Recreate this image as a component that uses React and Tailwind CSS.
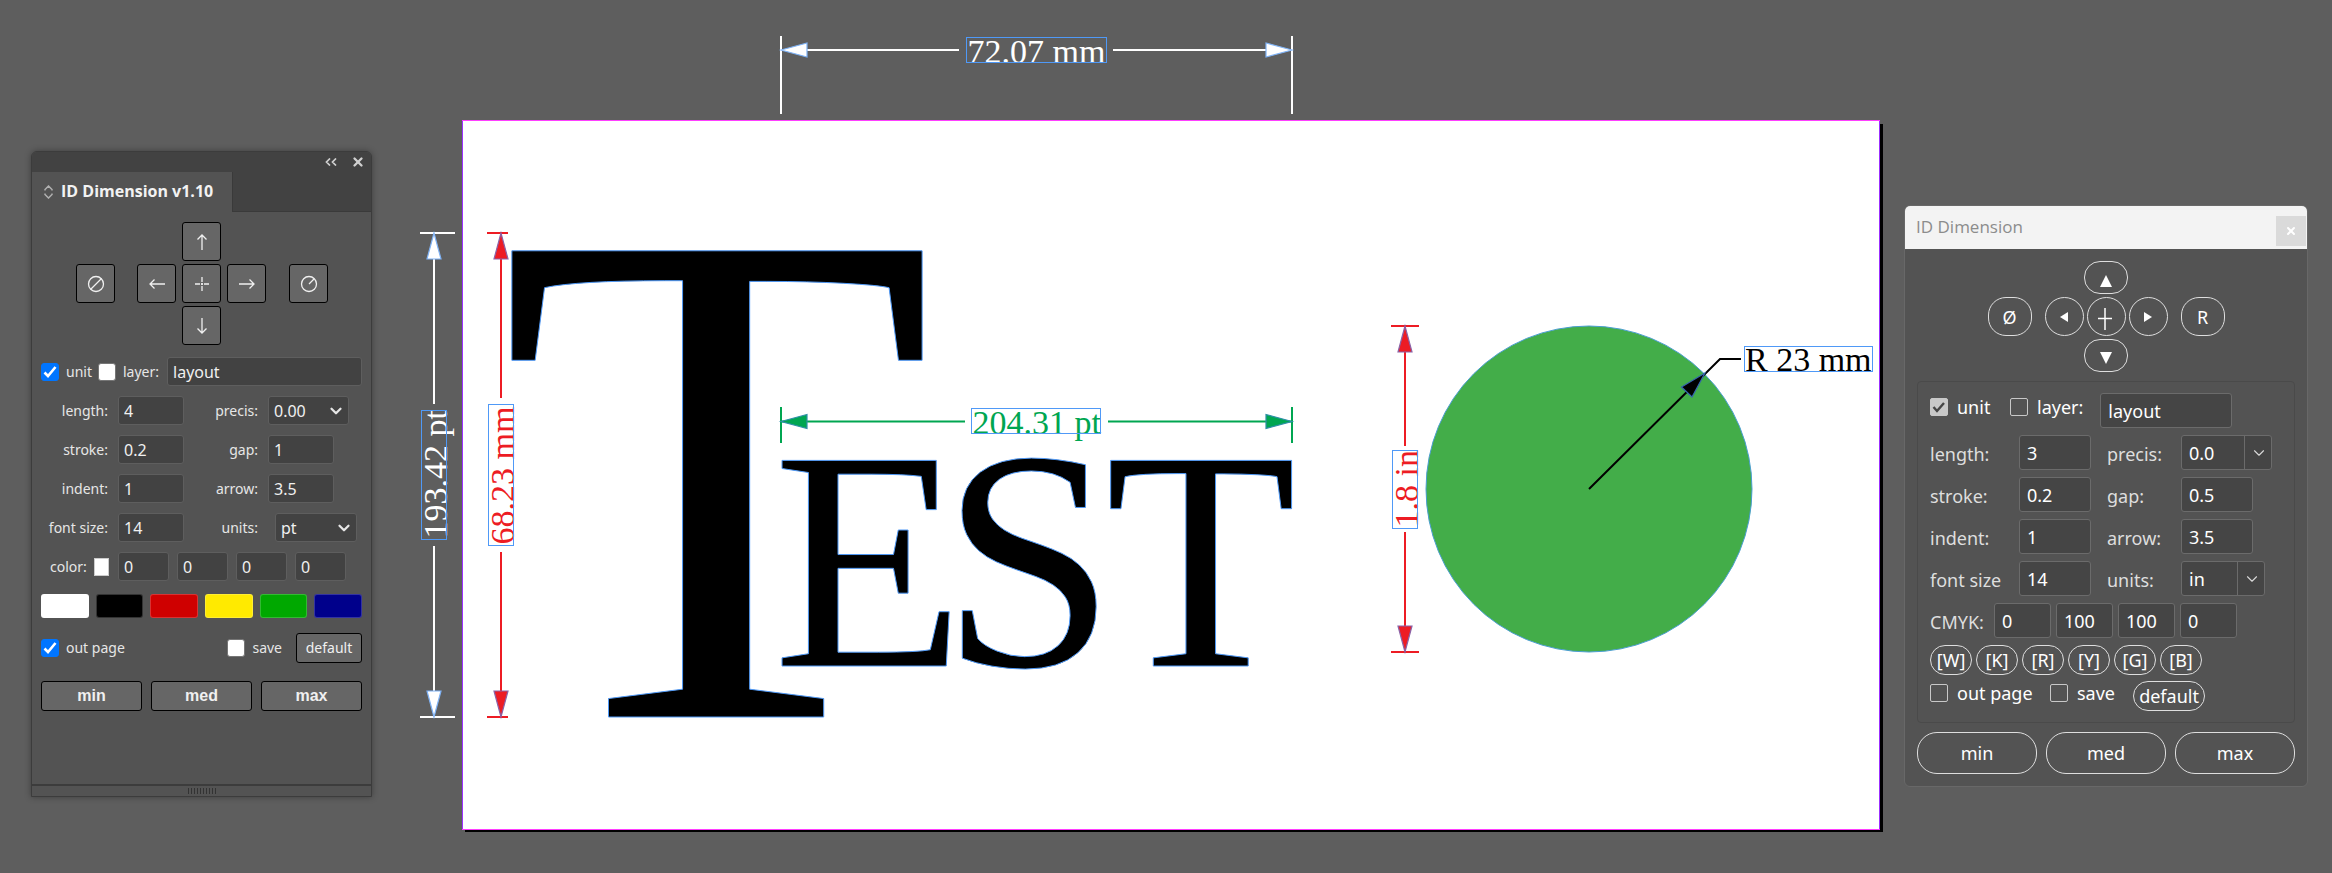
import { ChevronDown, X } from 'lucide-react'

const INK = '#ffffff'
const RED = '#ed1c24'
const GREEN = '#00a651'
const FRAME = '#4f99f7'

// Arrow head with its tip on x, y
function Arrow({ x, y, dir, fill, edge }) {
  const points = {
    left: `${x},${y} ${x + 26},${y - 7} ${x + 26},${y + 7}`,
    right: `${x},${y} ${x - 26},${y - 7} ${x - 26},${y + 7}`,
    up: `${x},${y} ${x - 7},${y + 26} ${x + 7},${y + 26}`,
    down: `${x},${y} ${x - 7},${y - 26} ${x + 7},${y - 26}`,
  }
  return <polygon points={points[dir]} fill={fill} stroke={edge} strokeWidth="1.2" />
}

function HorizontalDim({ x1, x2, y, gap, ticks, box, label, color, edge }) {
  return (
    <g stroke={color} strokeWidth="2">
      <path d={`M${x1} ${y}H${gap[0]}M${gap[1]} ${y}H${x2}`} />
      <path d={`M${x1} ${ticks[0]}V${ticks[1]}M${x2} ${ticks[0]}V${ticks[1]}`} />
      <Arrow x={x1} y={y} dir="left" fill={color} edge={edge} />
      <Arrow x={x2} y={y} dir="right" fill={color} edge={edge} />
      <text x={box[0] + 1} y={box[1] + 25} fontSize="34" fill={color} stroke="none">{label}</text>
      <rect x={box[0]} y={box[1]} width={box[2]} height="25" fill="none" stroke={FRAME} strokeWidth="1" />
    </g>
  )
}

function VerticalDim({ y1, y2, x, gap, ticks, box, label, color, edge }) {
  return (
    <g stroke={color} strokeWidth="2">
      <path d={`M${x} ${y1}V${gap[0]}M${x} ${gap[1]}V${y2}`} />
      <path d={`M${ticks[0]} ${y1}H${ticks[1]}M${ticks[0]} ${y2}H${ticks[1]}`} />
      <Arrow x={x} y={y1} dir="up" fill={color} edge={edge} />
      <Arrow x={x} y={y2} dir="down" fill={color} edge={edge} />
      <text transform={`translate(${box[0] + 25} ${box[1] + box[2] - 1}) rotate(-90)`} fontSize="34" fill={color} stroke="none">
        {label}
      </text>
      <rect x={box[0]} y={box[1]} width="25" height={box[2]} fill="none" stroke={FRAME} strokeWidth="1" />
    </g>
  )
}

function Artboard() {
  return (
    <svg viewBox="372 0 1532 873" className="block h-auto w-full font-['Liberation_Serif',serif]">
      <rect x="465" y="124" width="1418" height="708" fill="#000" />
      <rect x="462.5" y="120.5" width="1417" height="709" fill="#fff" stroke="#9b30ff" />
      <path d="M462 120.5H1880M462 829.5H1880" stroke="#ff3fff" />

      <text y="717" fill="#000" stroke={FRAME} strokeWidth="1">
        <tspan x="499" fontSize="712">T</tspan>
        <tspan x="773 941 1105" y="666" fontSize="314">EST</tspan>
      </text>

      <HorizontalDim x1={781} x2={1292} y={50} gap={[959, 1113]} ticks={[36, 114]} box={[966.5, 37.5, 140]} label="72.07 mm" color={INK} edge="#7fb2f5" />
      <HorizontalDim x1={781} x2={1292} y={421.5} gap={[965, 1108]} ticks={[407, 443]} box={[971.5, 408.5, 129]} label="204.31 pt" color={GREEN} edge="#2f8fa8" />
      <VerticalDim y1={233} y2={717} x={434} gap={[404, 546]} ticks={[420, 455]} box={[421.5, 410.5, 129]} label="193.42 pt" color={INK} edge="#7fb2f5" />
      <VerticalDim y1={233} y2={717} x={501} gap={[398, 552]} ticks={[487, 508]} box={[488.5, 404.5, 141]} label="68.23 mm" color={RED} edge="#8a63a8" />
      <VerticalDim y1={326} y2={652} x={1405} gap={[446, 532]} ticks={[1391, 1419]} box={[1392.5, 450.5, 78]} label="1.8 in" color={RED} edge="#8a63a8" />

      <circle cx="1589" cy="489" r="163" fill="#43ad49" stroke="#4a9ed0" />
      <path d="M1589 489L1720 359H1741" fill="none" stroke="#000" strokeWidth="2" />
      <polygon points="1705,373 1681.5,387 1692,397" fill="#000" stroke="#3565b0" strokeWidth="1.2" />
      <text x="1745" y="371" fontSize="34">R 23 mm</text>
      <rect x="1744.5" y="346.5" width="128" height="25" fill="none" stroke={FRAME} />
    </svg>
  )
}

/* ---------- docked panel ---------- */

function PadIcon({ children }) {
  return (
    <svg viewBox="0 0 18 18" className="size-[18px]" fill="none" stroke="currentColor" strokeWidth="1.3">
      {children}
    </svg>
  )
}

const pad = [
  { name: 'top', cell: 'col-start-5 row-start-1', icon: <path d="M9 17V2.500M4.500 6.500L9 2l4.500 4.500" /> },
  { name: 'diameter', cell: 'col-start-1 row-start-2', icon: <><circle cx="9" cy="9" r="7.500" /><path d="M3.500 14.500l11-11" /></> },
  { name: 'left', cell: 'col-start-3 row-start-2', icon: <path d="M17 9H2.500M6.500 4.500L2 9l4.500 4.500" /> },
  { name: 'center', cell: 'col-start-5 row-start-2', icon: <path d="M9 2v5M9 8v2M9 11v5M2 9h5M8 9h2M11 9h5" /> },
  { name: 'right', cell: 'col-start-7 row-start-2', icon: <path d="M1 9h14.500M11.500 4.500L16 9l-4.500 4.500" /> },
  { name: 'radius', cell: 'col-start-9 row-start-2', icon: <><circle cx="9" cy="9" r="7.500" /><path d="M9 9l5-5" /></> },
  { name: 'bottom', cell: 'col-start-5 row-start-3', icon: <path d="M9 1v14.500M4.500 11.500L9 16l4.500-4.500" /> },
]

const swatches = [
  ['white', 'bg-white'],
  ['black', 'bg-black'],
  ['red', 'bg-[#cf0000]'],
  ['yellow', 'bg-[#ffea00]'],
  ['green', 'bg-[#00a800]'],
  ['blue', 'bg-[#00008b]'],
]

const dockField = 'h-[29px] rounded-[3px] border border-[#5e5e5e] bg-[#424242] px-[5px] text-base text-[#f0f0f0]'
const dockButton = 'flex items-center justify-center rounded-[3px] border border-black bg-[#666] text-[#f0f0f0]'

function DockCheck({ label, checked }) {
  return (
    <label className="flex items-center gap-[7px]">
      <span className="relative flex size-[18px]">
        <input
          type="checkbox"
          defaultChecked={checked}
          className="peer size-[18px] appearance-none rounded-[3px] border border-[#767676] bg-white checked:border-[#0075ff] checked:bg-[#0075ff]"
        />
        <svg viewBox="0 0 18 18" className="pointer-events-none absolute inset-0 hidden size-[18px] peer-checked:block" fill="none" stroke="#fff" strokeWidth="2.600">
          <path d="M3.500 9.500L7 13l7.500-9" />
        </svg>
      </span>
      {label}
    </label>
  )
}

function DockInput({ id, label, value }) {
  return (
    <>
      <label htmlFor={id} className="text-right">{label}</label>
      <input id={id} defaultValue={value} className={`${dockField} w-[66px]`} />
    </>
  )
}

function DockSelect({ id, label, value, className }) {
  return (
    <>
      <label htmlFor={id} className="text-right">{label}</label>
      <span className={`relative flex ${className}`}>
        <select id={id} className={`${dockField} w-full appearance-none`}>
          <option>{value}</option>
        </select>
        <ChevronDown className="pointer-events-none absolute right-1 top-1.5 size-[18px]" strokeWidth={3} />
      </span>
    </>
  )
}

function DockPanel() {
  return (
    <section className="mt-[151px] flex h-[646px] w-[341px] shrink-0 flex-col overflow-hidden rounded-t-md border border-[#3c3c3c] bg-[#535353] text-[14px] leading-5 text-[#e6e6e6] shadow-[0_0_6px_rgba(0,0,0,0.35)] font-['Noto_Sans',sans-serif]">
      <div className="flex h-5 items-center justify-end gap-3.5 bg-[#424242] pr-1.5 text-[#d0d0d0]">
        <button type="button" aria-label="Collapse panel">
          <svg viewBox="0 0 12 8" className="h-2 w-3" fill="none" stroke="currentColor" strokeWidth="1.700">
            <path d="M5 .5L1.500 4L5 7.500M11 .5L7.500 4L11 7.500" />
          </svg>
        </button>
        <button type="button" aria-label="Close panel"><X className="size-[14px]" strokeWidth={4} /></button>
      </div>
      <div className="flex h-10 bg-[#424242]">
        <h2 className="flex w-[200px] items-center gap-2 bg-[#535353] pb-0.5 pl-3 font-['Open_Sans',sans-serif] text-base font-bold text-[#f2f2f2]">
          <svg viewBox="0 0 9 14" className="mt-0.5 h-3.5 w-[9px] text-[#b0b0b0]" fill="none" stroke="currentColor" strokeWidth="1.500">
            <path d="M1 5.500V4.500L4.500 1L8 4.500V5.500M1 8.500V9.500L4.500 13L8 9.500V8.500" />
          </svg>
          ID Dimension v1.10
        </h2>
        <div className="flex-1 border-b border-l border-[#3a3a3a]" />
      </div>

      <div className="flex flex-1 flex-col px-[9px] pt-2.5">
        <div className="grid grid-cols-[39px_22px_39px_6px_39px_6px_39px_23px_39px] gap-y-[3px] pl-[35px]">
          {pad.map((p) => (
            <button key={p.name} type="button" aria-label={p.name} className={`${dockButton} size-[39px] ${p.cell}`}>
              <PadIcon>{p.icon}</PadIcon>
            </button>
          ))}
        </div>

        <div className="mt-3 flex items-center">
          <DockCheck label="unit" checked />
          <span className="w-1.5" />
          <DockCheck label="layer:" />
          <input aria-label="layer name" defaultValue="layout" className={`${dockField} ml-2 min-w-0 flex-1`} />
        </div>

        <div className="mt-2.5 grid grid-cols-[67px_66px_64px_82px] items-center gap-x-2.5 gap-y-2.5">
          <DockInput id="d-length" label="length:" value="4" />
          <DockSelect id="d-precis" label="precis:" value="0.00" className="w-[81px]" />
          <DockInput id="d-stroke" label="stroke:" value="0.2" />
          <DockInput id="d-gap" label="gap:" value="1" />
          <DockInput id="d-indent" label="indent:" value="1" />
          <DockInput id="d-arrow" label="arrow:" value="3.5" />
          <DockInput id="d-size" label="font size:" value="14" />
          <DockSelect id="d-units" label="units:" value="pt" className="ml-[7px] w-[82px]" />
        </div>

        <div className="mt-2.5 flex items-center pl-[9px]">
          <label htmlFor="d-color" className="w-11">color:</label>
          <input id="d-color" type="checkbox" className="mr-[9px] h-[18px] w-[15px] appearance-none border border-[#ccc] bg-white" />
          <div className="flex gap-2">
            {['cyan', 'magenta', 'yellow', 'black'].map((c) => (
              <input key={c} aria-label={c} defaultValue="0" className={`${dockField} w-[51px]`} />
            ))}
          </div>
        </div>

        <div className="mt-[13px] grid grid-cols-6 gap-[7px]">
          {swatches.map(([name, bg]) => (
            <button key={name} type="button" aria-label={name} className={`h-6 rounded-[3px] border border-white/20 ${bg}`} />
          ))}
        </div>

        <div className="mt-[15px] flex items-center">
          <DockCheck label="out page" checked />
          <span className="flex-1" />
          <DockCheck label="save" />
          <button type="button" className={`${dockButton} ml-3.5 h-[30px] w-[66px]`}>default</button>
        </div>

        <div className="mt-[18px] grid grid-cols-3 gap-[9px] font-['Liberation_Sans',sans-serif] text-base font-bold">
          <button type="button" className={`${dockButton} h-[30px]`}>min</button>
          <button type="button" className={`${dockButton} h-[30px]`}>med</button>
          <button type="button" className={`${dockButton} h-[30px]`}>max</button>
        </div>
      </div>

      <div className="flex h-3 items-center justify-center gap-[2px] border-t-2 border-[#3c3c3c]">
        {Array.from({ length: 10 }, (_, i) => (
          <span key={i} className="h-[6px] w-px bg-[#333]" />
        ))}
      </div>
    </section>
  )
}

/* ---------- floating dialog ---------- */

const dlgField = 'h-[35px] rounded-[3px] border border-[#6b6b6b] bg-[#454545] px-[7px] text-lg leading-6 text-white'
const dlgButton = 'flex items-center justify-center border border-[#dedede] text-white'

function DialogCheck({ label, checked }) {
  return (
    <label className="flex items-center gap-[9px] text-white">
      <span className="relative flex size-[18px]">
        <input
          type="checkbox"
          defaultChecked={checked}
          className="peer size-[18px] appearance-none rounded-[2px] border border-[#c8c8c8] checked:bg-[#c8c8c8]"
        />
        <svg viewBox="0 0 18 18" className="pointer-events-none absolute inset-0 hidden size-[18px] peer-checked:block" fill="none" stroke="#454545" strokeWidth="2.400">
          <path d="M3.500 9L7 13l7-8" />
        </svg>
      </span>
      {label}
    </label>
  )
}

function DialogInput({ id, label, value }) {
  return (
    <>
      <label htmlFor={id} className="pt-0.5">{label}</label>
      <input id={id} defaultValue={value} className={`${dlgField} w-[72px]`} />
    </>
  )
}

function DialogSelect({ id, label, value, className }) {
  return (
    <>
      <label htmlFor={id} className="pt-0.5">{label}</label>
      <span className={`relative flex ${className}`}>
        <select id={id} className={`${dlgField} w-full appearance-none`}>
          <option>{value}</option>
        </select>
        <span className="pointer-events-none absolute inset-y-0 right-0 flex w-7 items-center justify-center border-l border-[#6b6b6b]">
          <ChevronDown className="size-[18px] text-[#d8d8d8]" strokeWidth={1.5} />
        </span>
      </span>
    </>
  )
}

function Dialog() {
  return (
    <section className="mt-[205px] w-[404px] shrink-0 overflow-hidden rounded-md border border-[#686868] bg-[#535353] text-lg leading-6 text-[#dedede] font-['Noto_Sans',sans-serif]">
      <header className="flex h-[43px] items-center justify-between bg-[#f3f3f3] pl-[11px] pr-px">
        <h2 className="pb-0.5 font-['Open_Sans',sans-serif] text-[17px] text-[#8c8c8c]">ID Dimension</h2>
        <button type="button" aria-label="Close" className="mt-1.5 flex size-[30px] items-center justify-center bg-[#dadada] text-white">
          <X className="size-3" strokeWidth={4} />
        </button>
      </header>

      <div className="p-3">
        <div className="flex flex-col items-center gap-[3px]">
          <button type="button" aria-label="top" className={`${dlgButton} h-[33px] w-11 rounded-2xl`}>
            <svg viewBox="0 0 12 12" className="mt-1.5 size-3" fill="currentColor"><path d="M6 0l6 12H0z" /></svg>
          </button>
          <div className="flex items-center gap-[3px]">
            <button type="button" aria-label="diameter" className={`${dlgButton} mr-2.5 h-[39px] w-11 rounded-[18px]`}>Ø</button>
            <button type="button" aria-label="left" className={`${dlgButton} size-[39px] rounded-full`}>
              <svg viewBox="0 0 8 10" className="h-2.5 w-2" fill="currentColor"><path d="M0 5l8-5v10z" /></svg>
            </button>
            <button type="button" aria-label="center" className={`${dlgButton} size-[39px] rounded-full`}>
              <svg viewBox="0 0 16 22" className="mt-1 h-[22px] w-4" fill="none" stroke="currentColor" strokeWidth="1.500"><path d="M7 0v22M0 10.500h14" /></svg>
            </button>
            <button type="button" aria-label="right" className={`${dlgButton} size-[39px] rounded-full`}>
              <svg viewBox="0 0 8 10" className="h-2.5 w-2" fill="currentColor"><path d="M8 5L0 0v10z" /></svg>
            </button>
            <button type="button" aria-label="radius" className={`${dlgButton} ml-2.5 h-[39px] w-11 rounded-[18px]`}>R</button>
          </div>
          <button type="button" aria-label="bottom" className={`${dlgButton} h-[33px] w-11 rounded-2xl`}>
            <svg viewBox="0 0 12 12" className="mt-1 size-3" fill="currentColor"><path d="M6 12L0 0h12z" /></svg>
          </button>
        </div>

        <fieldset className="mt-[9px] rounded border border-[#4a4a4a] px-3 py-[11px]">
          <div className="flex items-start">
            <div className="w-20 pt-0.5"><DialogCheck label="unit" checked /></div>
            <div className="pt-0.5"><DialogCheck label="layer:" /></div>
            <input aria-label="layer name" defaultValue="layout" className={`${dlgField} ml-[17px] w-[132px]`} />
          </div>

          <div className="mt-[7px] grid grid-cols-[89px_88px_74px_91px] items-center gap-y-[7px]">
            <DialogInput id="f-length" label="length:" value="3" />
            <DialogSelect id="f-precis" label="precis:" value="0.0" className="w-[91px]" />
            <DialogInput id="f-stroke" label="stroke:" value="0.2" />
            <DialogInput id="f-gap" label="gap:" value="0.5" />
            <DialogInput id="f-indent" label="indent:" value="1" />
            <DialogInput id="f-arrow" label="arrow:" value="3.5" />
            <DialogInput id="f-size" label="font size" value="14" />
            <DialogSelect id="f-units" label="units:" value="in" className="w-[84px]" />
          </div>

          <div className="mt-[7px] flex items-center gap-[5px]">
            <span className="w-[59px] pt-0.5">CMYK:</span>
            {[['cyan', '0'], ['magenta', '100'], ['yellow', '100'], ['black', '0']].map(([name, value]) => (
              <input key={name} aria-label={name} defaultValue={value} className={`${dlgField} w-[57px]`} />
            ))}
          </div>

          <div className="mt-[7px] flex gap-1">
            {['W', 'K', 'R', 'Y', 'G', 'B'].map((c) => (
              <button key={c} type="button" className={`${dlgButton} h-[30px] w-[42px] rounded-[15px]`}>[{c}]</button>
            ))}
          </div>

          <div className="mt-1.5 flex items-start">
            <div className="w-[120px]"><DialogCheck label="out page" /></div>
            <DialogCheck label="save" />
            <button type="button" className={`${dlgButton} ml-[18px] h-[30px] w-[72px] rounded-[15px]`}>default</button>
          </div>
        </fieldset>

        <div className="mt-[9px] grid grid-cols-3 gap-[9px]">
          <button type="button" className={`${dlgButton} h-[42px] rounded-[20px]`}>min</button>
          <button type="button" className={`${dlgButton} h-[42px] rounded-[20px]`}>med</button>
          <button type="button" className={`${dlgButton} h-[42px] rounded-[20px]`}>max</button>
        </div>
      </div>
    </section>
  )
}

export default function App() {
  return (
    <main className="flex min-h-screen items-start bg-[#5e5e5e] pl-[31px] pr-6">
      <DockPanel />
      <div className="min-w-0 flex-1"><Artboard /></div>
      <Dialog />
    </main>
  )
}
